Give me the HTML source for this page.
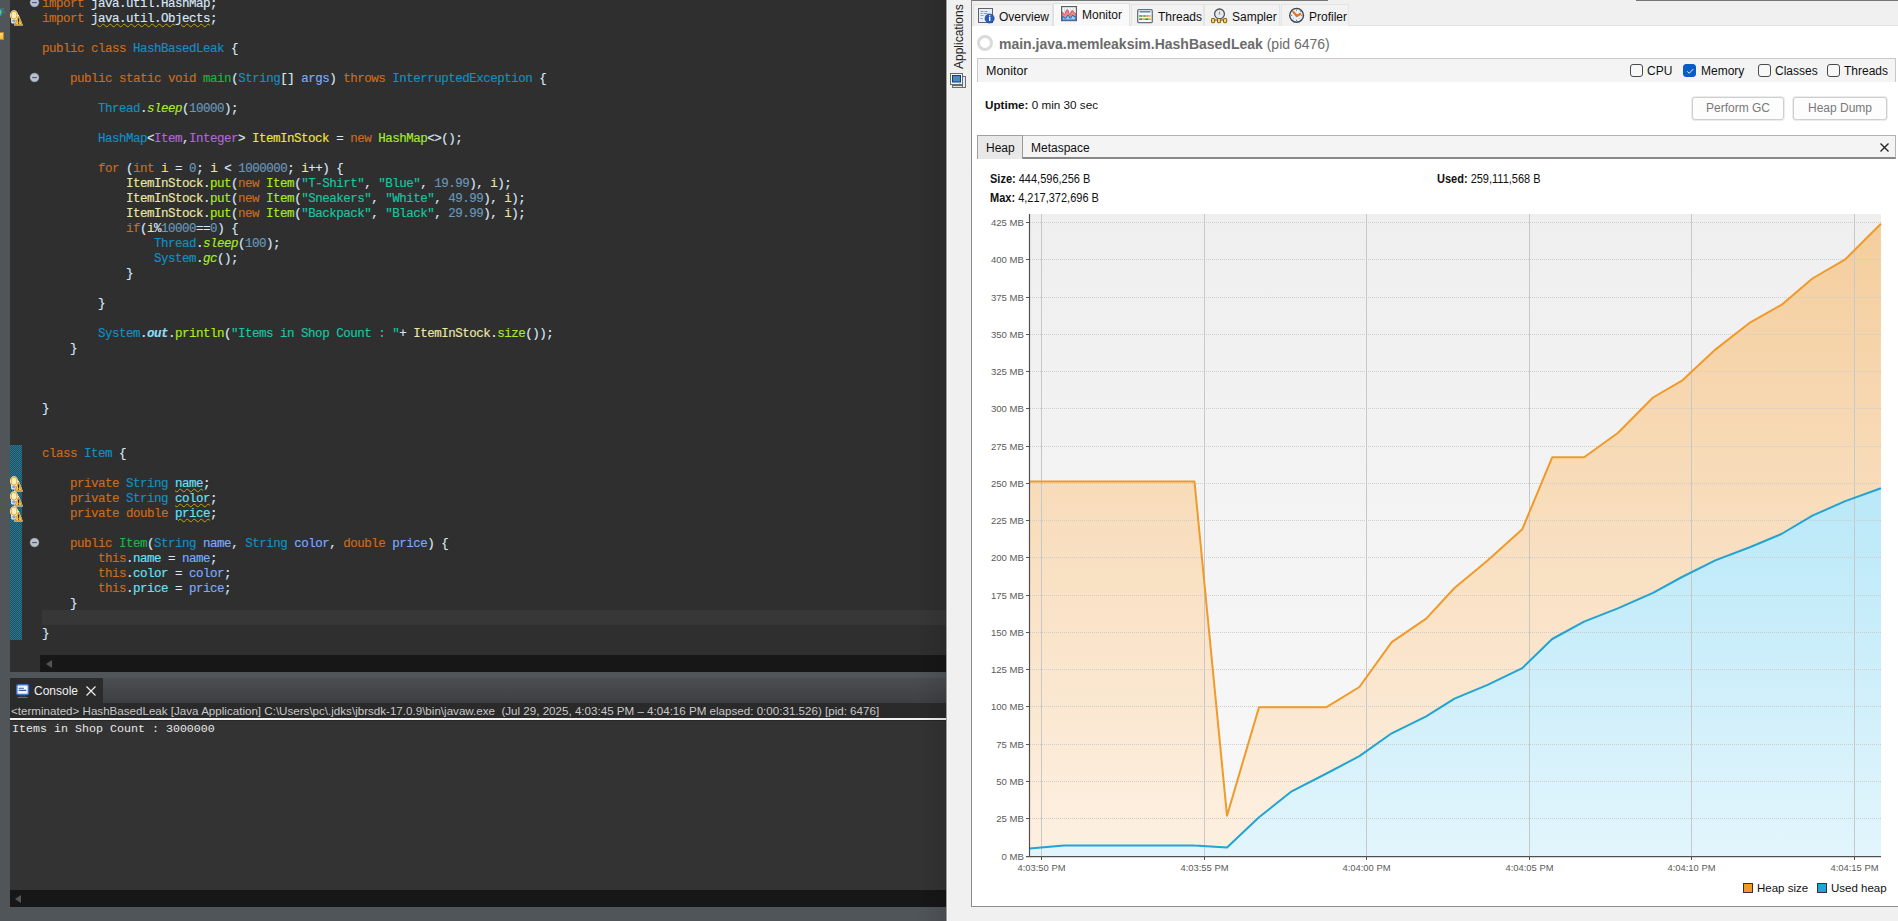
<!DOCTYPE html>
<html><head><meta charset="utf-8">
<style>
*{box-sizing:border-box}
html,body{margin:0;padding:0}
body{width:1898px;height:921px;position:relative;overflow:hidden;background:#50555a;font-family:"Liberation Sans",sans-serif}
.abs{position:absolute}
/* ---------- left eclipse ---------- */
#editor{position:absolute;left:10px;top:0;width:936px;height:672px;background:#2f2f2f;overflow:hidden}
#code{position:absolute;left:32px;top:-3px;font-family:"Liberation Mono",monospace;font-size:12.5px;letter-spacing:-0.5px;line-height:15px;-webkit-text-stroke:0.15px currentColor;color:#d9e8f7;white-space:pre}
.ln{height:15px}
.k{color:#cc6c1d}
.t{color:#1290c3}
.md{color:#1eb540}
.mc{color:#a7ec21}
.ms{color:#a7ec21;font-style:italic}
.n{color:#6897bb}
.s{color:#17c6a3}
.lv{color:#ebe7a6}
.lvd{color:#eee63a}
.p{color:#79abff}
.ta{color:#b166da}
.f{color:#66e1f8}
.sf{color:#8ddaf8;font-style:italic;font-weight:bold}
.w{text-decoration:underline wavy #c8a800;text-decoration-thickness:1px;text-underline-offset:1px}
.wf{color:#66e1f8;text-decoration:underline wavy #c8a800;text-decoration-thickness:1px;text-underline-offset:1px}
#curline{position:absolute;left:32px;top:610px;width:904px;height:15px;background:#373737}
#hscroll{position:absolute;left:30px;top:655px;width:906px;height:17px;background:#171717}
#console-tabbar{position:absolute;left:10px;top:678px;width:936px;height:25px;background:linear-gradient(#4b4d50,#3e3f42)}
#console-tab{position:absolute;left:0;top:0;width:93px;height:25px;background:#2b2b2b;color:#f0f0f0;font-size:12px}
#console-head{position:absolute;left:10px;top:703px;width:936px;height:15px;background:#2a2a2a;color:#c8c8c8;font-size:11.6px;white-space:pre}
#console-line{position:absolute;left:10px;top:718px;width:936px;height:2px;background:#f2f2f2}
#console-body{position:absolute;left:10px;top:720px;width:936px;height:170px;background:#333333;border-top:1px solid #262626}
#console-text{position:absolute;left:2px;top:1px;font-family:"Liberation Mono",monospace;font-size:11.67px;line-height:15px;color:#e8e8e8;white-space:pre}
#cscroll{position:absolute;left:10px;top:890px;width:936px;height:17px;background:#171717}
/* ---------- right visualvm ---------- */
#right{position:absolute;left:946px;top:0;width:952px;height:921px;background:#f0f0f0}
#sidebar-line{position:absolute;left:0;top:0;width:1px;height:921px;background:#9a9a9a}
.tab{position:absolute;top:5px;height:21px;background:#f2f2f2;border:1px solid #e4e4e4;border-bottom:none;font-size:12.5px;line-height:15px;color:#111}
.ui{font-size:12px;color:#111}
.chk{position:absolute;top:64px;width:13px;height:13px;border:1px solid #4a4a4a;border-radius:3px;background:#f8f8f8}
.btn{position:absolute;top:97px;height:23px;border:1px solid #cfcfcf;border-radius:3px;background:#fdfdfd;color:#7a7a7a;font-size:12px;text-align:center;line-height:21px;box-shadow:0 0 0 1px #ececec}
.ax{font-family:"Liberation Sans",sans-serif;font-size:9.9px;fill:#5a5a5a}
.axx{font-family:"Liberation Sans",sans-serif;font-size:9.9px;fill:#5a5a5a}
</style></head><body>

<!-- ============ LEFT: Eclipse ============ -->
<div id="editor">
  <div id="curline"></div>
  <div id="code"><div class="ln"><span class="k">import</span> java.util.HashMap;</div><div class="ln"><span class="k">import</span> <span class="w">java.util.Objects</span>;</div><div class="ln">&#8203;</div><div class="ln"><span class="k">public</span> <span class="k">class</span> <span class="t">HashBasedLeak</span> {</div><div class="ln">&#8203;</div><div class="ln">    <span class="k">public</span> <span class="k">static</span> <span class="k">void</span> <span class="md">main</span>(<span class="t">String</span>[] <span class="p">args</span>) <span class="k">throws</span> <span class="t">InterruptedException</span> {</div><div class="ln">&#8203;</div><div class="ln">        <span class="t">Thread</span>.<span class="ms">sleep</span>(<span class="n">10000</span>);</div><div class="ln">&#8203;</div><div class="ln">        <span class="t">HashMap</span>&lt;<span class="ta">Item</span>,<span class="ta">Integer</span>&gt; <span class="lvd">ItemInStock</span> = <span class="k">new</span> <span class="mc">HashMap</span>&lt;&gt;();</div><div class="ln">&#8203;</div><div class="ln">        <span class="k">for</span> (<span class="k">int</span> <span class="lvd">i</span> = <span class="n">0</span>; <span class="lv">i</span> &lt; <span class="n">1000000</span>; <span class="lv">i</span>++) {</div><div class="ln">            <span class="lv">ItemInStock</span>.<span class="mc">put</span>(<span class="k">new</span> <span class="mc">Item</span>(<span class="s">&quot;T-Shirt&quot;</span>, <span class="s">&quot;Blue&quot;</span>, <span class="n">19.99</span>), <span class="lv">i</span>);</div><div class="ln">            <span class="lv">ItemInStock</span>.<span class="mc">put</span>(<span class="k">new</span> <span class="mc">Item</span>(<span class="s">&quot;Sneakers&quot;</span>, <span class="s">&quot;White&quot;</span>, <span class="n">49.99</span>), <span class="lv">i</span>);</div><div class="ln">            <span class="lv">ItemInStock</span>.<span class="mc">put</span>(<span class="k">new</span> <span class="mc">Item</span>(<span class="s">&quot;Backpack&quot;</span>, <span class="s">&quot;Black&quot;</span>, <span class="n">29.99</span>), <span class="lv">i</span>);</div><div class="ln">            <span class="k">if</span>(<span class="lv">i</span>%<span class="n">10000</span>==<span class="n">0</span>) {</div><div class="ln">                <span class="t">Thread</span>.<span class="ms">sleep</span>(<span class="n">100</span>);</div><div class="ln">                <span class="t">System</span>.<span class="ms">gc</span>();</div><div class="ln">            }</div><div class="ln">&#8203;</div><div class="ln">        }</div><div class="ln">&#8203;</div><div class="ln">        <span class="t">System</span>.<span class="sf">out</span>.<span class="mc">println</span>(<span class="s">&quot;Items in Shop Count : &quot;</span>+ <span class="lv">ItemInStock</span>.<span class="mc">size</span>());</div><div class="ln">    }</div><div class="ln">&#8203;</div><div class="ln">&#8203;</div><div class="ln">&#8203;</div><div class="ln">}</div><div class="ln">&#8203;</div><div class="ln">&#8203;</div><div class="ln"><span class="k">class</span> <span class="t">Item</span> {</div><div class="ln">&#8203;</div><div class="ln">    <span class="k">private</span> <span class="t">String</span> <span class="wf">name</span>;</div><div class="ln">    <span class="k">private</span> <span class="t">String</span> <span class="wf">color</span>;</div><div class="ln">    <span class="k">private</span> <span class="k">double</span> <span class="wf">price</span>;</div><div class="ln">&#8203;</div><div class="ln">    <span class="k">public</span> <span class="md">Item</span>(<span class="t">String</span> <span class="p">name</span>, <span class="t">String</span> <span class="p">color</span>, <span class="k">double</span> <span class="p">price</span>) {</div><div class="ln">        <span class="k">this</span>.<span class="f">name</span> = <span class="p">name</span>;</div><div class="ln">        <span class="k">this</span>.<span class="f">color</span> = <span class="p">color</span>;</div><div class="ln">        <span class="k">this</span>.<span class="f">price</span> = <span class="p">price</span>;</div><div class="ln">    }</div><div class="ln">&#8203;</div><div class="ln">}</div></div>
  <!-- change bar -->
  <div class="abs" style="left:0;top:445px;width:12px;height:195px;background:repeating-conic-gradient(#1f7894 0% 25%, #2a4f5c 0% 50%) 0 0/2px 2px"></div>

  <!-- gutter icons -->
  <svg class="abs" style="left:0;top:10px" width="13" height="16" viewBox="0 0 13 16"><ellipse cx="4" cy="5.2" rx="4" ry="5" fill="#fff"/><rect x="1.2" y="8" width="5.6" height="5.5" rx="1.5" fill="#fff"/><ellipse cx="4" cy="5.2" rx="3" ry="4" fill="#fcefb0" stroke="#eda51c" stroke-width="1"/><rect x="2.2" y="9.6" width="3.6" height="2.8" rx="0.8" fill="#8fa2be"/><path d="M8.5 4.2L13 15.5H4Z" fill="#fff"/><path d="M8.5 6.3L12 14.6H5Z" fill="#f7c544" stroke="#cf8b12" stroke-width="0.9" stroke-linejoin="round"/><rect x="8" y="8.6" width="1.1" height="3.3" fill="#2a1e08"/><rect x="8" y="12.6" width="1.1" height="1.1" fill="#2a1e08"/></svg>
  <svg class="abs" style="left:0;top:476px" width="13" height="16" viewBox="0 0 13 16"><ellipse cx="4" cy="5.2" rx="4" ry="5" fill="#fff"/><rect x="1.2" y="8" width="5.6" height="5.5" rx="1.5" fill="#fff"/><ellipse cx="4" cy="5.2" rx="3" ry="4" fill="#fcefb0" stroke="#eda51c" stroke-width="1"/><rect x="2.2" y="9.6" width="3.6" height="2.8" rx="0.8" fill="#8fa2be"/><path d="M8.5 4.2L13 15.5H4Z" fill="#fff"/><path d="M8.5 6.3L12 14.6H5Z" fill="#f7c544" stroke="#cf8b12" stroke-width="0.9" stroke-linejoin="round"/><rect x="8" y="8.6" width="1.1" height="3.3" fill="#2a1e08"/><rect x="8" y="12.6" width="1.1" height="1.1" fill="#2a1e08"/></svg>
  <svg class="abs" style="left:0;top:491px" width="13" height="16" viewBox="0 0 13 16"><ellipse cx="4" cy="5.2" rx="4" ry="5" fill="#fff"/><rect x="1.2" y="8" width="5.6" height="5.5" rx="1.5" fill="#fff"/><ellipse cx="4" cy="5.2" rx="3" ry="4" fill="#fcefb0" stroke="#eda51c" stroke-width="1"/><rect x="2.2" y="9.6" width="3.6" height="2.8" rx="0.8" fill="#8fa2be"/><path d="M8.5 4.2L13 15.5H4Z" fill="#fff"/><path d="M8.5 6.3L12 14.6H5Z" fill="#f7c544" stroke="#cf8b12" stroke-width="0.9" stroke-linejoin="round"/><rect x="8" y="8.6" width="1.1" height="3.3" fill="#2a1e08"/><rect x="8" y="12.6" width="1.1" height="1.1" fill="#2a1e08"/></svg>
  <svg class="abs" style="left:0;top:506px" width="13" height="16" viewBox="0 0 13 16"><ellipse cx="4" cy="5.2" rx="4" ry="5" fill="#fff"/><rect x="1.2" y="8" width="5.6" height="5.5" rx="1.5" fill="#fff"/><ellipse cx="4" cy="5.2" rx="3" ry="4" fill="#fcefb0" stroke="#eda51c" stroke-width="1"/><rect x="2.2" y="9.6" width="3.6" height="2.8" rx="0.8" fill="#8fa2be"/><path d="M8.5 4.2L13 15.5H4Z" fill="#fff"/><path d="M8.5 6.3L12 14.6H5Z" fill="#f7c544" stroke="#cf8b12" stroke-width="0.9" stroke-linejoin="round"/><rect x="8" y="8.6" width="1.1" height="3.3" fill="#2a1e08"/><rect x="8" y="12.6" width="1.1" height="1.1" fill="#2a1e08"/></svg>
  <svg class="abs" style="left:19px;top:-3px" width="11" height="11" viewBox="0 0 11 11"><circle cx="5.5" cy="5.5" r="4.8" fill="#b8c0cc" stroke="#262626" stroke-width="0.6"/><rect x="3.2" y="5" width="4.6" height="1.1" fill="#465676"/></svg>
  <svg class="abs" style="left:19px;top:72px" width="11" height="11" viewBox="0 0 11 11"><circle cx="5.5" cy="5.5" r="4.8" fill="#b8c0cc" stroke="#262626" stroke-width="0.6"/><rect x="3.2" y="5" width="4.6" height="1.1" fill="#465676"/></svg>
  <svg class="abs" style="left:19px;top:537px" width="11" height="11" viewBox="0 0 11 11"><circle cx="5.5" cy="5.5" r="4.8" fill="#b8c0cc" stroke="#262626" stroke-width="0.6"/><rect x="3.2" y="5" width="4.6" height="1.1" fill="#465676"/></svg>
  <div id="hscroll"><div class="abs" style="left:6px;top:5px;width:0;height:0;border-top:4px solid transparent;border-bottom:4px solid transparent;border-right:6px solid #555"></div></div>
</div>

<!-- left strip marks -->
<svg class="abs" style="left:0;top:7px" width="6" height="11" viewBox="0 0 6 11"><path d="M0 1.2a2.2 4 0 0 1 0 8z" fill="#2a8fa8"/><path d="M0 3a1.2 2.2 0 0 1 0 4.4z" fill="#7ac070"/><path d="M2 2.2L3.8 1.6M2.4 4.4L4.8 5.6" stroke="#3aa07a" stroke-width="0.9"/></svg>
<div class="abs" style="left:0;top:32px;width:4px;height:8px;background:linear-gradient(#fde08a,#f2b844);border:1px solid #c8861a;border-left:none"></div>
<div id="console-tabbar">
  <div id="console-tab">
    <svg class="abs" style="left:6px;top:5px" width="14" height="15" viewBox="0 0 14 15">
      <rect x="0.8" y="1.7" width="11.6" height="9.8" rx="1.3" fill="#f0f8fc" stroke="#3a74c0" stroke-width="1.5"/>
      <path d="M3.2 5.3h4.2M3.2 7.4h6.6" stroke="#3d5a9a" stroke-width="1.1" stroke-linecap="round"/>
      <path d="M5 12.5v1M8.2 12.5v1" stroke="#3a74c0" stroke-width="1"/>
      <path d="M2 14.5h9.4" stroke="#3a74c0" stroke-width="1.1" stroke-linecap="round"/>
    </svg>
    <div class="abs" style="left:24px;top:5px;line-height:16px">Console</div>
    <svg class="abs" style="left:76px;top:8px" width="10" height="10"><path d="M0.5 0.5L9.5 9.5M9.5 0.5L0.5 9.5" stroke="#eee" stroke-width="1.2"/></svg>
  </div>
</div>
<div id="console-head"><div class="abs" style="left:1px;top:0;line-height:15px">&lt;terminated&gt; HashBasedLeak [Java Application] C:\Users\pc\.jdks\jbrsdk-17.0.9\bin\javaw.exe  (Jul 29, 2025, 4:03:45 PM – 4:04:16 PM elapsed: 0:00:31.526) [pid: 6476]</div></div>
<div id="console-line"></div>
<div id="console-body"><div id="console-text">Items in Shop Count : 3000000</div></div>
<div id="cscroll"><div class="abs" style="left:5px;top:5px;width:0;height:0;border-top:4px solid transparent;border-bottom:4px solid transparent;border-right:6px solid #555"></div></div>

<div class="abs" style="left:916px;top:0;width:30px;height:921px;background:linear-gradient(to right,rgba(0,0,0,0),rgba(0,0,0,0.1))"></div>
<!-- ============ RIGHT: VisualVM ============ -->
<div id="right">
  <div id="sidebar-line"></div>
  <div class="abs" style="left:1px;top:0;width:1px;height:921px;background:#f8f8f8"></div>
  <!-- vertical Applications label -->
  <div class="abs ui" style="left:5px;top:69px;transform:rotate(-90deg);transform-origin:0 0;width:70px;line-height:16px;font-size:12px;color:#222">Applications</div>
  <!-- computer icon -->
  <svg class="abs" style="left:4px;top:73px" width="17" height="16" viewBox="0 0 17 16">
    <rect x="12.5" y="3.5" width="3" height="11" fill="#e8eaec" stroke="#6a6f75"/>
    <rect x="0.5" y="0.5" width="12" height="11" fill="#f4f4f4" stroke="#6a6a6a"/>
    <rect x="2" y="2" width="9" height="7.5" fill="#0d3f8f"/>
    <rect x="3" y="3" width="7" height="5.5" fill="#4f86c0"/>
    <rect x="9" y="9.5" width="1.5" height="1" fill="#5fd35f"/>
    <rect x="2.5" y="12.5" width="10" height="2" fill="#dfe2e5" stroke="#6a6f75"/>
  </svg>

  <!-- tab strip + white panel -->
  <div class="abs" style="left:25px;top:0;width:1px;height:907px;background:#8c8c8c"></div>
  <div class="abs" style="left:26px;top:25px;width:926px;height:1px;background:#e2e2e2"></div>
  <div class="abs" style="left:26px;top:26px;width:926px;height:880px;background:#fff"></div>
  <div class="abs" style="left:25px;top:906px;width:927px;height:1px;background:#8c8c8c"></div>
  <!-- top line -->
  <div class="abs" style="left:26px;top:0;width:356px;height:1px;background:#767676"></div>
  <div class="abs" style="left:690px;top:0;width:262px;height:1px;background:#767676"></div>
  <!-- tabs -->
  <div class="tab" style="left:27px;top:4px;width:80px;height:22px">
    <svg class="abs" style="left:4px;top:3px" width="17" height="17" viewBox="0 0 17 17">
      <rect x="0.5" y="0.5" width="14" height="14" fill="#e8eef6" stroke="#5f6368"/>
      <path d="M2.5 3.5h3M6.5 3.5h3M2.5 5.5h2M5.5 5.5h4M2.5 7.5h3M2.5 10.5h2" stroke="#8fa0b5" stroke-width="1"/>
      <circle cx="11.6" cy="10.5" r="4.6" fill="#2c5bb8" stroke="#1d3f8a" stroke-width="0.6"/>
      <rect x="11" y="9" width="1.4" height="4" fill="#fff"/><rect x="11" y="7.2" width="1.4" height="1.2" fill="#fff"/>
    </svg>
    <span class="abs" style="left:25px;top:5px;font-size:12px">Overview</span></div>
  <div class="tab" style="left:107px;top:3px;height:23px;width:77px;background:#f9f9f9;border-color:#e0e0e0">
    <svg class="abs" style="left:7px;top:2px" width="17" height="16" viewBox="0 0 17 16">
      <rect x="0.6" y="0.6" width="14.8" height="14" fill="#f4f9fd" stroke="#5a6068" stroke-width="1.2"/>
      <path d="M3.5 1.2v13M6.5 1.2v13M9.5 1.2v13M12.5 1.2v13" stroke="#d2dde8" stroke-width="0.9"/>
      <path d="M1.2 14V6C2.2 6 2.6 8.5 3.6 8.5C4.8 8.5 4.8 3.5 6.2 3.5C7.6 3.5 7.6 8.8 8.8 8.8C10 8.8 9.8 4.6 11.2 4.6C12.4 4.6 12.6 7.4 14.8 7.6V14Z" fill="#ee8a8a" stroke="#d94848" stroke-width="1"/>
      <path d="M1.2 14V10.8C2.4 10 3 12.2 4.4 12.2C5.8 12.2 5.8 9.2 7 9.2C8.2 9.2 8.2 12.2 9.2 12.2C10.4 12.2 10.6 9.2 11.6 9.2C12.8 9.2 13.2 11.6 14.8 10.6V14Z" fill="#9fd0f6" stroke="#1f6fc0" stroke-width="1.1"/>
    </svg>
    <span class="abs" style="left:28px;top:4px;font-size:12px">Monitor</span></div>
  <div class="tab" style="left:185px;top:4px;width:73px;height:22px">
    <svg class="abs" style="left:5px;top:4px" width="17" height="15" viewBox="0 0 17 15">
      <rect x="0.7" y="0.7" width="14.6" height="13" rx="1.2" fill="#fbfcfe" stroke="#6a7079" stroke-width="1.3"/>
      <path d="M2.5 2.8h11" stroke="#4f7fb0" stroke-width="1.4"/>
      <path d="M2.2 7h3.2M6.2 7h2.6" stroke="#2f9a2f" stroke-width="1.7"/>
      <path d="M5.4 7h0.8M8.8 7h1M10.8 7h3" stroke="#e6a33a" stroke-width="1.7"/>
      <path d="M9.8 7h1" stroke="#d9505a" stroke-width="1.7"/>
      <path d="M2.2 10.2h3" stroke="#707070" stroke-width="1.7"/>
      <path d="M5.2 10.2h3M11.2 10.2h2.6" stroke="#e6a33a" stroke-width="1.7"/>
      <path d="M8.2 10.2h3" stroke="#2f9a2f" stroke-width="1.7"/>
    </svg>
    <span class="abs" style="left:26px;top:5px;font-size:12px">Threads</span></div>
  <div class="tab" style="left:258px;top:4px;width:76px;height:22px">
    <svg class="abs" style="left:6px;top:3px" width="18" height="17" viewBox="0 0 18 17">
      <circle cx="8.5" cy="5.9" r="4.9" fill="#ddeefb" stroke="#4d545c" stroke-width="1.3"/>
      <path d="M8.5 2.2L9.4 6.6H7.6Z" fill="#e8792a"/>
      <path d="M2 12h13" stroke="#50565e" stroke-width="1"/>
      <rect x="0.5" y="10.5" width="3.2" height="4.2" rx="0.6" fill="#f6cf72" stroke="#8d5c06"/>
      <rect x="6.5" y="10.5" width="3.2" height="4.2" rx="0.6" fill="#f6cf72" stroke="#8d5c06"/>
      <rect x="12.5" y="10.5" width="3.2" height="4.2" rx="0.6" fill="#f6cf72" stroke="#8d5c06"/>
    </svg>
    <span class="abs" style="left:27px;top:5px;font-size:12px">Sampler</span></div>
  <div class="tab" style="left:335px;top:4px;width:68px;height:22px">
    <svg class="abs" style="left:7px;top:2px" width="17" height="17" viewBox="0 0 17 17">
      <circle cx="7.6" cy="8.3" r="6.9" fill="#e4f1fb" stroke="#40454b" stroke-width="1.4"/>
      <path d="M7.6 2.6v1.2M7.6 12.8v1.2M1.9 8.3h1.2M12.1 8.3h1.2M3.6 4.3l0.7 0.7M10.9 11.6l0.7 0.7M11.6 4.3l-0.7 0.7M3.6 12.3l0.7-0.7" stroke="#556070" stroke-width="0.9"/>
      <path d="M4.6 5.2 L7.8 9 L11.2 7" stroke="#e8741e" stroke-width="2.2" fill="none" stroke-linecap="round" stroke-linejoin="round"/>
    </svg>
    <span class="abs" style="left:27px;top:5px;font-size:12px">Profiler</span></div>

  <!-- title -->
  <div class="abs" style="left:31px;top:35px;width:16px;height:16px;border:3px solid #dadadd;border-radius:50%"></div>
  <div class="abs" style="left:53px;top:35px;font-size:14px;line-height:18px;color:#6b6b6b;white-space:pre"><b>main.java.memleaksim.HashBasedLeak</b> (pid 6476)</div>

  <!-- Monitor header -->
  <div class="abs" style="left:31px;top:58px;width:919px;height:24px;background:#f4f4f4;border-top:1px solid #c8c8c8;border-left:1px solid #c8c8c8;border-right:1px solid #c8c8c8"></div>
  <div class="abs ui" style="left:40px;top:64px;line-height:15px;font-size:12.5px">Monitor</div>
  <div class="chk" style="left:684px"></div><div class="abs ui" style="left:701px;top:64px;line-height:15px">CPU</div>
  <div class="chk" style="left:737px;background:#0a5cc7;border-color:#0a5cc7"><svg class="abs" style="left:1px;top:1px" width="10" height="10"><path d="M2.2 5.3L4.2 7.3L8.3 3" stroke="#fff" stroke-width="0.9" fill="none"/></svg></div><div class="abs ui" style="left:755px;top:64px;line-height:15px">Memory</div>
  <div class="chk" style="left:812px"></div><div class="abs ui" style="left:829px;top:64px;line-height:15px">Classes</div>
  <div class="chk" style="left:881px"></div><div class="abs ui" style="left:898px;top:64px;line-height:15px">Threads</div>

  <!-- uptime + buttons -->
  <div class="abs ui" style="left:39px;top:97px;line-height:15px;font-size:11.7px"><b>Uptime:</b> 0 min 30 sec</div>
  <div class="btn" style="left:746px;width:92px">Perform GC</div>
  <div class="btn" style="left:847px;width:94px">Heap Dump</div>

  <!-- Heap tab bar -->
  <div class="abs" style="left:31px;top:135px;width:919px;height:24px;background:#f4f4f4;border-top:1px solid #b4b4b4;border-left:1px solid #b4b4b4;border-right:1px solid #b4b4b4;border-bottom:2px solid #888"></div>
  <div class="abs" style="left:31px;top:135px;width:46px;height:24px;background:#e8e8e8;border:1px solid #a0a0a0;border-bottom:none"></div>
  <div class="abs ui" style="left:40px;top:141px;line-height:15px">Heap</div>
  <div class="abs" style="left:76px;top:136px;width:1px;height:22px;background:#9a9a9a"></div>
  <div class="abs ui" style="left:85px;top:141px;line-height:15px">Metaspace</div>
  <svg class="abs" style="left:934px;top:143px" width="9" height="9"><path d="M0.5 0.5L8.5 8.5M8.5 0.5L0.5 8.5" stroke="#222" stroke-width="1.3"/></svg>

  <!-- size/used/max -->
  <div class="abs ui" style="left:44px;top:172px;line-height:15px;font-size:12px;transform:scaleX(0.917);transform-origin:0 0;white-space:nowrap"><b>Size:</b> 444,596,256 B</div>
  <div class="abs ui" style="left:44px;top:191px;line-height:15px;font-size:12px;transform:scaleX(0.917);transform-origin:0 0;white-space:nowrap"><b>Max:</b> 4,217,372,696 B</div>
  <div class="abs ui" style="left:491px;top:172px;line-height:15px;font-size:12px;transform:scaleX(0.917);transform-origin:0 0;white-space:nowrap"><b>Used:</b> 259,111,568 B</div>

  <!-- legend -->
  <div class="abs" style="left:797px;top:883px;width:10px;height:10px;background:#f29a27;border:1px solid #333"></div>
  <div class="abs ui" style="left:811px;top:881px;line-height:14px;font-size:11.5px">Heap size</div>
  <div class="abs" style="left:871px;top:883px;width:10px;height:10px;background:#1ea6d8;border:1px solid #333"></div>
  <div class="abs ui" style="left:885px;top:881px;line-height:14px;font-size:11.5px">Used heap</div>
</div>

<svg width="1898" height="921" style="position:absolute;left:0;top:0">
<defs>
<linearGradient id="bg" x1="0" y1="214" x2="0" y2="856" gradientUnits="userSpaceOnUse"><stop offset="0" stop-color="#efefef"/><stop offset="1" stop-color="#f8f8f8"/></linearGradient>
<linearGradient id="og" x1="0" y1="214" x2="0" y2="856" gradientUnits="userSpaceOnUse"><stop offset="0" stop-color="#f4cd9c"/><stop offset="1" stop-color="#fdf0e2"/></linearGradient>
<linearGradient id="bgr" x1="0" y1="480" x2="0" y2="856" gradientUnits="userSpaceOnUse"><stop offset="0" stop-color="#b8e8f8"/><stop offset="1" stop-color="#e2f5fc"/></linearGradient>
</defs>
<rect x="1029" y="214" width="852" height="642" fill="url(#bg)"/>
<path d="M1029.5 481.5 L1064.0 481.5 L1193.5 481.5 L1194.5 481.5 L1227.0 815.7 L1259.0 707.2 L1291.7 707.2 L1326.5 707.2 L1359.4 687.0 L1391.7 642.1 L1426.2 618.6 L1454.5 588.0 L1487.6 560.5 L1522.3 529.2 L1552.2 457.3 L1584.1 457.3 L1617.8 433.0 L1653.0 397.5 L1682.0 380.7 L1715.3 349.6 L1750.4 322.3 L1781.4 304.9 L1812.4 278.5 L1845.3 259.3 L1880.9 223.7 L1880.9 856 L1029.5 856 Z" fill="url(#og)"/>
<path d="M1029.5 848.5 L1064.0 845.5 L1193.5 845.5 L1194.5 845.6 L1227.0 847.5 L1259.0 817.3 L1291.7 791.3 L1326.5 773.5 L1359.4 756.1 L1391.7 733.3 L1426.2 716.4 L1454.5 698.6 L1487.6 684.8 L1522.3 668.1 L1552.2 639.0 L1584.1 621.6 L1617.8 608.4 L1653.0 592.8 L1682.0 577.0 L1715.3 560.4 L1750.4 547.0 L1781.4 534.0 L1812.4 515.7 L1845.3 501.1 L1880.9 488.3 L1880.9 856 L1029.5 856 Z" fill="url(#bgr)"/>
<line x1="1030" y1="856.5" x2="1881" y2="856.5" stroke="#cdcdcd" stroke-width="1" stroke-dasharray="1 1"/>
<line x1="1030" y1="818.5" x2="1881" y2="818.5" stroke="#cdcdcd" stroke-width="1" stroke-dasharray="1 1"/>
<line x1="1030" y1="781.5" x2="1881" y2="781.5" stroke="#cdcdcd" stroke-width="1" stroke-dasharray="1 1"/>
<line x1="1030" y1="744.5" x2="1881" y2="744.5" stroke="#cdcdcd" stroke-width="1" stroke-dasharray="1 1"/>
<line x1="1030" y1="706.5" x2="1881" y2="706.5" stroke="#cdcdcd" stroke-width="1" stroke-dasharray="1 1"/>
<line x1="1030" y1="669.5" x2="1881" y2="669.5" stroke="#cdcdcd" stroke-width="1" stroke-dasharray="1 1"/>
<line x1="1030" y1="632.5" x2="1881" y2="632.5" stroke="#cdcdcd" stroke-width="1" stroke-dasharray="1 1"/>
<line x1="1030" y1="595.5" x2="1881" y2="595.5" stroke="#cdcdcd" stroke-width="1" stroke-dasharray="1 1"/>
<line x1="1030" y1="557.5" x2="1881" y2="557.5" stroke="#cdcdcd" stroke-width="1" stroke-dasharray="1 1"/>
<line x1="1030" y1="520.5" x2="1881" y2="520.5" stroke="#cdcdcd" stroke-width="1" stroke-dasharray="1 1"/>
<line x1="1030" y1="483.5" x2="1881" y2="483.5" stroke="#cdcdcd" stroke-width="1" stroke-dasharray="1 1"/>
<line x1="1030" y1="446.5" x2="1881" y2="446.5" stroke="#cdcdcd" stroke-width="1" stroke-dasharray="1 1"/>
<line x1="1030" y1="408.5" x2="1881" y2="408.5" stroke="#cdcdcd" stroke-width="1" stroke-dasharray="1 1"/>
<line x1="1030" y1="371.5" x2="1881" y2="371.5" stroke="#cdcdcd" stroke-width="1" stroke-dasharray="1 1"/>
<line x1="1030" y1="334.5" x2="1881" y2="334.5" stroke="#cdcdcd" stroke-width="1" stroke-dasharray="1 1"/>
<line x1="1030" y1="297.5" x2="1881" y2="297.5" stroke="#cdcdcd" stroke-width="1" stroke-dasharray="1 1"/>
<line x1="1030" y1="259.5" x2="1881" y2="259.5" stroke="#cdcdcd" stroke-width="1" stroke-dasharray="1 1"/>
<line x1="1030" y1="222.5" x2="1881" y2="222.5" stroke="#cdcdcd" stroke-width="1" stroke-dasharray="1 1"/>
<line x1="1041.5" y1="214" x2="1041.5" y2="856" stroke="#c8c8c8" stroke-width="1"/>
<line x1="1204.5" y1="214" x2="1204.5" y2="856" stroke="#c8c8c8" stroke-width="1"/>
<line x1="1366.5" y1="214" x2="1366.5" y2="856" stroke="#c8c8c8" stroke-width="1"/>
<line x1="1529.5" y1="214" x2="1529.5" y2="856" stroke="#c8c8c8" stroke-width="1"/>
<line x1="1691.5" y1="214" x2="1691.5" y2="856" stroke="#c8c8c8" stroke-width="1"/>
<line x1="1854.5" y1="214" x2="1854.5" y2="856" stroke="#c8c8c8" stroke-width="1"/>
<path d="M1029.5 481.5 L1064.0 481.5 L1193.5 481.5 L1194.5 481.5 L1227.0 815.7 L1259.0 707.2 L1291.7 707.2 L1326.5 707.2 L1359.4 687.0 L1391.7 642.1 L1426.2 618.6 L1454.5 588.0 L1487.6 560.5 L1522.3 529.2 L1552.2 457.3 L1584.1 457.3 L1617.8 433.0 L1653.0 397.5 L1682.0 380.7 L1715.3 349.6 L1750.4 322.3 L1781.4 304.9 L1812.4 278.5 L1845.3 259.3 L1880.9 223.7" fill="none" stroke="#ef9a2a" stroke-width="2" stroke-linejoin="round"/>
<path d="M1029.5 848.5 L1064.0 845.5 L1193.5 845.5 L1194.5 845.6 L1227.0 847.5 L1259.0 817.3 L1291.7 791.3 L1326.5 773.5 L1359.4 756.1 L1391.7 733.3 L1426.2 716.4 L1454.5 698.6 L1487.6 684.8 L1522.3 668.1 L1552.2 639.0 L1584.1 621.6 L1617.8 608.4 L1653.0 592.8 L1682.0 577.0 L1715.3 560.4 L1750.4 547.0 L1781.4 534.0 L1812.4 515.7 L1845.3 501.1 L1880.9 488.3" fill="none" stroke="#22a3d4" stroke-width="2" stroke-linejoin="round"/>
<line x1="1029.5" y1="214" x2="1029.5" y2="857" stroke="#505050" stroke-width="1.2"/>
<line x1="1026" y1="856.5" x2="1881" y2="856.5" stroke="#505050" stroke-width="1.25"/>
<line x1="1026" y1="856.5" x2="1029" y2="856.5" stroke="#555" stroke-width="1"/>
<text transform="translate(1024 860.0) scale(0.97 1)" text-anchor="end" class="ax">0 MB</text>
<line x1="1026" y1="818.5" x2="1029" y2="818.5" stroke="#555" stroke-width="1"/>
<text transform="translate(1024 822.0) scale(0.97 1)" text-anchor="end" class="ax">25 MB</text>
<line x1="1026" y1="781.5" x2="1029" y2="781.5" stroke="#555" stroke-width="1"/>
<text transform="translate(1024 785.0) scale(0.97 1)" text-anchor="end" class="ax">50 MB</text>
<line x1="1026" y1="744.5" x2="1029" y2="744.5" stroke="#555" stroke-width="1"/>
<text transform="translate(1024 748.0) scale(0.97 1)" text-anchor="end" class="ax">75 MB</text>
<line x1="1026" y1="706.5" x2="1029" y2="706.5" stroke="#555" stroke-width="1"/>
<text transform="translate(1024 710.0) scale(0.97 1)" text-anchor="end" class="ax">100 MB</text>
<line x1="1026" y1="669.5" x2="1029" y2="669.5" stroke="#555" stroke-width="1"/>
<text transform="translate(1024 673.0) scale(0.97 1)" text-anchor="end" class="ax">125 MB</text>
<line x1="1026" y1="632.5" x2="1029" y2="632.5" stroke="#555" stroke-width="1"/>
<text transform="translate(1024 636.0) scale(0.97 1)" text-anchor="end" class="ax">150 MB</text>
<line x1="1026" y1="595.5" x2="1029" y2="595.5" stroke="#555" stroke-width="1"/>
<text transform="translate(1024 599.0) scale(0.97 1)" text-anchor="end" class="ax">175 MB</text>
<line x1="1026" y1="557.5" x2="1029" y2="557.5" stroke="#555" stroke-width="1"/>
<text transform="translate(1024 561.0) scale(0.97 1)" text-anchor="end" class="ax">200 MB</text>
<line x1="1026" y1="520.5" x2="1029" y2="520.5" stroke="#555" stroke-width="1"/>
<text transform="translate(1024 524.0) scale(0.97 1)" text-anchor="end" class="ax">225 MB</text>
<line x1="1026" y1="483.5" x2="1029" y2="483.5" stroke="#555" stroke-width="1"/>
<text transform="translate(1024 487.0) scale(0.97 1)" text-anchor="end" class="ax">250 MB</text>
<line x1="1026" y1="446.5" x2="1029" y2="446.5" stroke="#555" stroke-width="1"/>
<text transform="translate(1024 450.0) scale(0.97 1)" text-anchor="end" class="ax">275 MB</text>
<line x1="1026" y1="408.5" x2="1029" y2="408.5" stroke="#555" stroke-width="1"/>
<text transform="translate(1024 412.0) scale(0.97 1)" text-anchor="end" class="ax">300 MB</text>
<line x1="1026" y1="371.5" x2="1029" y2="371.5" stroke="#555" stroke-width="1"/>
<text transform="translate(1024 375.0) scale(0.97 1)" text-anchor="end" class="ax">325 MB</text>
<line x1="1026" y1="334.5" x2="1029" y2="334.5" stroke="#555" stroke-width="1"/>
<text transform="translate(1024 338.0) scale(0.97 1)" text-anchor="end" class="ax">350 MB</text>
<line x1="1026" y1="297.5" x2="1029" y2="297.5" stroke="#555" stroke-width="1"/>
<text transform="translate(1024 301.0) scale(0.97 1)" text-anchor="end" class="ax">375 MB</text>
<line x1="1026" y1="259.5" x2="1029" y2="259.5" stroke="#555" stroke-width="1"/>
<text transform="translate(1024 263.0) scale(0.97 1)" text-anchor="end" class="ax">400 MB</text>
<line x1="1026" y1="222.5" x2="1029" y2="222.5" stroke="#555" stroke-width="1"/>
<text transform="translate(1024 226.0) scale(0.97 1)" text-anchor="end" class="ax">425 MB</text>
<line x1="1041.5" y1="856" x2="1041.5" y2="860" stroke="#555" stroke-width="1"/>
<text transform="translate(1041.5 871) scale(0.95 1)" text-anchor="middle" class="axx">4:03:50 PM</text>
<line x1="1204.5" y1="856" x2="1204.5" y2="860" stroke="#555" stroke-width="1"/>
<text transform="translate(1204.5 871) scale(0.95 1)" text-anchor="middle" class="axx">4:03:55 PM</text>
<line x1="1366.5" y1="856" x2="1366.5" y2="860" stroke="#555" stroke-width="1"/>
<text transform="translate(1366.5 871) scale(0.95 1)" text-anchor="middle" class="axx">4:04:00 PM</text>
<line x1="1529.5" y1="856" x2="1529.5" y2="860" stroke="#555" stroke-width="1"/>
<text transform="translate(1529.5 871) scale(0.95 1)" text-anchor="middle" class="axx">4:04:05 PM</text>
<line x1="1691.5" y1="856" x2="1691.5" y2="860" stroke="#555" stroke-width="1"/>
<text transform="translate(1691.5 871) scale(0.95 1)" text-anchor="middle" class="axx">4:04:10 PM</text>
<line x1="1854.5" y1="856" x2="1854.5" y2="860" stroke="#555" stroke-width="1"/>
<text transform="translate(1854.5 871) scale(0.95 1)" text-anchor="middle" class="axx">4:04:15 PM</text>
</svg>

</body></html>
